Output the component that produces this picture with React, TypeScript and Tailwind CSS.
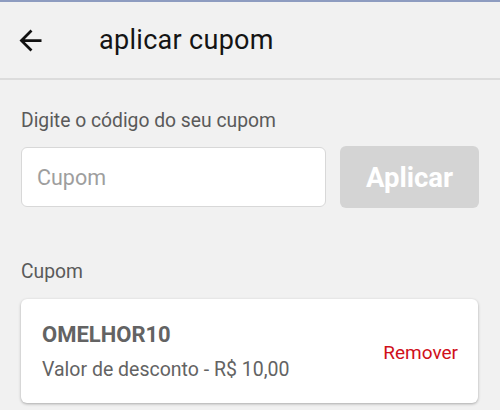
const BackArrow = () => (
    <svg viewBox="0 0 24 24" className="ml-[14px] w-[33px] h-[33px] fill-[#111]">
        <path d="M20 11H7.83l5.59-5.59L12 4l-8 8 8 8 1.41-1.41L7.83 13H20v-2z" />
    </svg>
);

const App = () => {
    return (
        <div className="w-[500px] h-[410px] overflow-hidden bg-[#f1f1f1] font-['Roboto',sans-serif] border-t-2 border-[#8e9cc0]">
            <header className="h-[78px] flex items-center bg-[#f1f1f1] border-b-2 border-[#dcdcdc]">
                <BackArrow />
                <span className="ml-[52px] text-[27px] tracking-[0.3px] text-[#141414] leading-none">aplicar cupom</span>
            </header>

            <main className="px-[21px] pt-[31px]">
                <p className="text-[19.3px] text-[#5a5a5a] leading-none">Digite o código do seu cupom</p>

                <div className="mt-[16px] flex items-center gap-[14px] h-[62px]">
                    <div className="w-[305px] h-[60px] bg-white rounded-[6px] border border-[#d8d8d8] flex items-center px-[15px]">
                        <span className="text-[21.5px] text-[#9e9e9e] leading-none">Cupom</span>
                    </div>
                    <button className="w-[139px] h-[62px] bg-[#d4d4d4] rounded-[6px] text-white text-[27.5px] font-bold leading-none">
                        Aplicar
                    </button>
                </div>

                <p className="mt-[54px] text-[19.3px] text-[#5a5a5a] leading-none">Cupom</p>

                <div className="mt-[17px] w-[457px] h-[104px] bg-white rounded-[6px] shadow-[0_1px_3px_rgba(0,0,0,0.3)] flex justify-between pl-[21px] pr-[20px]">
                    <div className="flex flex-col gap-[14px] pt-[25px]">
                        <span className="text-[22px] font-bold text-[#636363] leading-none">OMELHOR10</span>
                        <span className="text-[19.5px] text-[#636363] leading-none">Valor de desconto - R$ 10,00</span>
                    </div>
                    <span className="pt-[44px] text-[19px] text-[#d0101a] leading-none">Remover</span>
                </div>
            </main>
        </div>
    );
};

export default App;
